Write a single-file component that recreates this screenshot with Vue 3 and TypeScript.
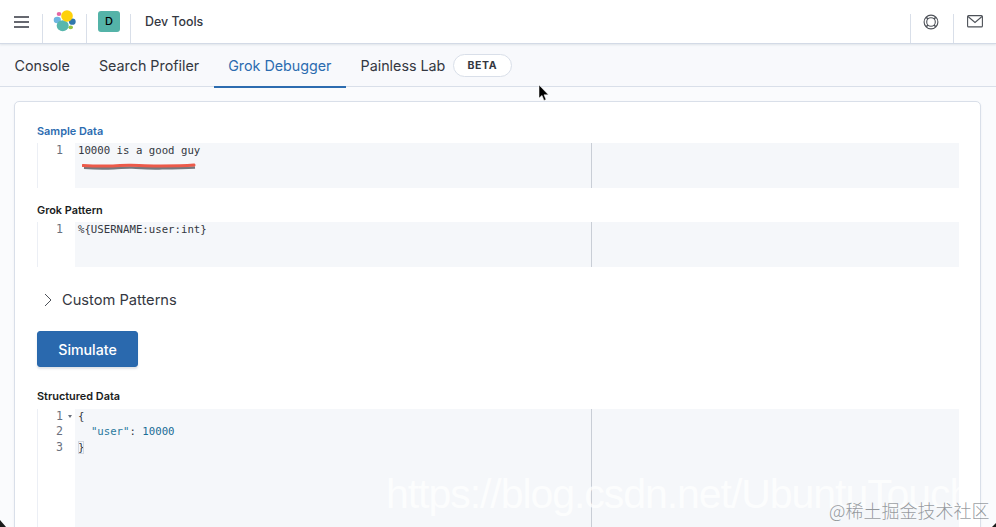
<script setup lang="ts">
const tabs = [
  { label: 'Console', active: false },
  { label: 'Search Profiler', active: false },
  { label: 'Grok Debugger', active: true },
  { label: 'Painless Lab', active: false },
]
</script>

<template>
  <div class="page">
    <header class="topbar">
      <button class="cell menu" aria-label="menu">
        <svg width="15" height="12" viewBox="0 0 15 12"><path d="M0 1h15M0 6h15M0 11h15" stroke="#343741" stroke-width="1.700" fill="none" /></svg>
      </button>
      <div class="cell logo">
        <svg width="26" height="26" viewBox="0 0 26 26">
          <ellipse cx="7" cy="6" rx="2.300" ry="2" fill="#e667a4" />
          <ellipse cx="5.300" cy="12" rx="3.600" ry="3.200" fill="#6db6e0" />
          <ellipse cx="20.300" cy="13.700" rx="3.400" ry="3.100" fill="#2f77ad" />
          <ellipse cx="18.700" cy="19.300" rx="2.300" ry="1.900" fill="#96c442" />
          <ellipse cx="10.700" cy="17.700" rx="6" ry="5.500" fill="#58b7ad" />
          <ellipse cx="15" cy="8" rx="5.800" ry="5.800" fill="#fed10a" />
        </svg>
      </div>
      <div class="cell space"><span class="avatar">D</span></div>
      <div class="title">Dev Tools</div>
      <div class="cell right help">
        <svg width="16" height="16" viewBox="0 0 16 16" fill="none" stroke="#4d5158" stroke-width="1.100">
          <circle cx="8" cy="8" r="6.900" />
          <circle cx="8" cy="8" r="4.300" />
          <path d="M3.200 3.200 5 5M12.800 3.200 11 5M3.200 12.800 5 11M12.800 12.800 11 11" stroke-width="1.600" />
        </svg>
      </div>
      <div class="cell right mail">
        <svg width="16" height="13" viewBox="0 0 16 13" fill="none" stroke="#4d5158" stroke-width="1.100">
          <rect x=".6" y=".6" width="14.800" height="11.300" rx="1" />
          <path d="M1 1.500 8 7.500l7-6" />
        </svg>
      </div>
    </header>

    <nav class="tabs">
      <a v-for="t in tabs" :key="t.label" class="tab" :class="{ active: t.active }">{{ t.label }}</a>
      <span class="beta">BETA</span>
    </nav>

    <main class="panel">
      <label class="field-label blue">Sample Data</label>
      <div class="editor short first">
        <div class="gutter"><div class="ln">1</div></div>
        <div class="code">
          <div class="line">10000 is a good guy</div>
          <svg class="scribble" width="116" height="12" viewBox="0 0 116 12">
            <path d="M2 7.800c10 .6 20 .8 30 .3 8-.3 12-.8 18-.6 10 .3 20 1 30 .8 12 0 24-.2 33-.8" stroke="#55585e" stroke-width="2.600" fill="none" opacity=".8" />
            <path d="M1 5.600c10 .5 20 .7 30 .3 8-.3 12-.8 18-.6 10 .3 20 .9 30 .7 12 0 24-.2 33-.9" stroke="#ec5a4a" stroke-width="3" fill="none" stroke-linecap="round" />
          </svg>
          <i class="margin"></i>
        </div>
      </div>

      <label class="field-label">Grok Pattern</label>
      <div class="editor short">
        <div class="gutter"><div class="ln">1</div></div>
        <div class="code">
          <div class="line">%{USERNAME:user:int}</div>
          <i class="margin"></i>
        </div>
      </div>

      <div class="accordion">
        <svg width="8" height="14" viewBox="0 0 8 14"><path d="M1 1l6 6-6 6" fill="none" stroke="#4d5158" stroke-width="1" /></svg>
        <span>Custom Patterns</span>
      </div>

      <button class="simulate">Simulate</button>

      <label class="field-label tall-label">Structured Data</label>
      <div class="editor tall">
        <div class="gutter">
          <div class="ln">1<b class="fold"></b></div>
          <div class="ln">2</div>
          <div class="ln">3</div>
        </div>
        <div class="code">
          <div class="line">{</div>
          <div class="line">&nbsp;&nbsp;<span class="key">"user"</span>: <span class="num">10000</span></div>
          <div class="line"><span class="brace">}</span></div>
          <i class="margin"></i>
        </div>
      </div>
    </main>

    <svg class="pointer" width="12" height="18" viewBox="0 0 12 18"><path d="M1 0v13l3-2.600 2 5 2-.8-2-4.800h4.400z" fill="#000" stroke="#fff" stroke-width=".5" /></svg>
    <div class="mark-url">https://blog.csdn.net/UbuntuTouch</div>
    <div class="mark-cn">@稀土掘金技术社区</div>
    <svg class="corner left" width="6" height="7" viewBox="0 0 6 7"><path d="M0 0l6 7H0z" fill="#1a1a1a" /></svg>
    <svg class="corner right" width="4" height="4" viewBox="0 0 4 4"><path d="M4 0v4H0z" fill="#1a1a1a" /></svg>
  </div>
</template>

<style>
html, body { margin: 0; overflow: hidden; }
</style>

<style scoped>
.page {
  position: relative;
  width: 996px;
  height: 527px;
  overflow: hidden;
  background: #fafbfd;
  font-family: Inter, "Liberation Sans", sans-serif;
  color: #343741;
}
.topbar {
  display: flex;
  align-items: stretch;
  height: 43px;
  background: #fff;
  border-bottom: 1px solid #d3dae6;
  box-shadow: 0 1px 2px rgba(152, 162, 179, .25);
  position: relative;
}
.cell {
  display: flex;
  align-items: center;
  justify-content: center;
  width: 43px;
  height: 43px;
  padding: 0;
  box-sizing: border-box;
  background: none;
  border: 0;
  position: relative;
}
.cell::after {
  content: "";
  position: absolute;
  right: 0;
  top: 14px;
  bottom: 0;
  width: 1px;
  background: #d9dfe9;
}
.logo { width: 44px; align-items: flex-start; padding-top: 8px; }
.space { width: 44px; }
.avatar {
  display: flex;
  align-items: center;
  justify-content: center;
  width: 22px;
  height: 21px;
  margin-top: -1px;
  border-radius: 3px;
  background: #54b3a8;
  color: #000;
  font-size: 11px;
  font-weight: 500;
}
.title {
  flex: 1;
  padding-left: 14px;
  line-height: 43px;
  font-size: 12.400px;
  font-weight: 500;
  color: #343741;
}
.right::after { left: 0; right: auto; }
.help { padding-right: 2px; }
.tabs {
  display: flex;
  align-items: center;
  height: 43px;
  box-sizing: border-box;
  border-bottom: 1px solid #d9dfe9;
  background: #f8f9fc;
}
.tab {
  display: flex;
  align-items: center;
  height: 42px;
  padding: 0 14.500px;
  font-size: 14.300px;
  color: #343741;
  box-sizing: border-box;
  white-space: nowrap;
}
.tab.active {
  color: #2c6cb0;
  box-shadow: inset 0 -2px 0 #2c6cb0;
  height: 44px;
  margin-bottom: -1px;
}
.beta {
  margin-left: -7px;
  width: 59px;
  height: 23px;
  line-height: 21px;
  box-sizing: border-box;
  border: 1px solid #d9dfe9;
  border-radius: 12px;
  text-align: center;
  font-size: 10.500px;
  font-weight: 700;
  letter-spacing: .6px;
  background: #fff;
  color: #343741;
}
.panel {
  margin: 14px 15px 0 14px;
  height: 500px;
  padding: 22px 21px 0 22px;
  background: #fff;
  border: 1px solid #d9dfe9;
  border-radius: 5px;
  box-sizing: border-box;
  box-shadow: 0 1px 2px rgba(152, 162, 179, .15);
}
.field-label {
  display: block;
  height: 19px;
  line-height: 15px;
  font-size: 10.900px;
  font-weight: 600;
  color: #1a1c21;
}
.field-label.blue { color: #2c6cb0; }
.field-label.tall-label { height: 20px; }
.editor {
  display: flex;
  overflow: hidden;
  margin-bottom: 21px;
}
.editor.first { margin-bottom: 15px; }
.short { height: 45px; }
.tall { height: 200px; }
.gutter {
  width: 37px;
  flex: none;
  border-left: 1px solid #eceff5;
}
.ln {
  position: relative;
  height: 15.300px;
  line-height: 15.300px;
  padding-right: 12px;
  text-align: right;
  font-family: "DejaVu Sans Mono", monospace;
  font-size: 11.600px;
  color: #69707d;
}
.fold {
  position: absolute;
  right: 3px;
  top: 6px;
  border: 2.500px solid transparent;
  border-top: 3px solid #69707d;
  border-bottom: 0;
}
.code {
  position: relative;
  flex: 1;
  background: #f5f7fa;
  padding-left: 3px;
  font-family: "DejaVu Sans Mono", monospace;
  font-size: 10.700px;
  color: #343741;
}
.line {
  height: 15.300px;
  line-height: 15.300px;
  white-space: pre;
}
.margin {
  position: absolute;
  left: 516px;
  top: 0;
  bottom: 0;
  width: 1px;
  background: #c9ced6;
}
.scribble {
  position: absolute;
  left: 7px;
  top: 17px;
}
.key { color: #2a7a9e; }
.num { color: #1a6d96; }
.brace { outline: 1px solid #d3d8e0; outline-offset: -1px; }
.accordion {
  display: flex;
  align-items: center;
  gap: 10px;
  height: 24px;
  margin: 0 0 19px 7px;
  font-size: 14.650px;
  color: #343741;
}
.simulate {
  display: block;
  width: 101px;
  height: 36px;
  margin-bottom: 22px;
  border: 1px solid #2868ac;
  border-radius: 3px;
  background: #2a69ae;
  color: #fff;
  font-family: inherit;
  font-size: 14.200px;
  font-weight: 500;
  box-shadow: 0 2px 2px rgba(152, 162, 179, .3);
}
.pointer {
  position: absolute;
  left: 538px;
  top: 85px;
}
.mark-url {
  position: absolute;
  left: 386px;
  top: 469px;
  font-family: "Liberation Sans", sans-serif;
  font-size: 41px;
  letter-spacing: -1.050px;
  line-height: 50px;
  color: rgba(255, 255, 255, .75);
  white-space: nowrap;
}
.mark-cn {
  position: absolute;
  left: 829px;
  top: 499px;
  font-family: "Noto Sans CJK SC", sans-serif;
  font-size: 18px;
  font-weight: 300;
  line-height: 22px;
  color: rgba(110, 115, 120, .72);
  white-space: nowrap;
}
.corner { position: absolute; bottom: 0; }
.corner.left { left: 0; }
.corner.right { right: 0; }
</style>
